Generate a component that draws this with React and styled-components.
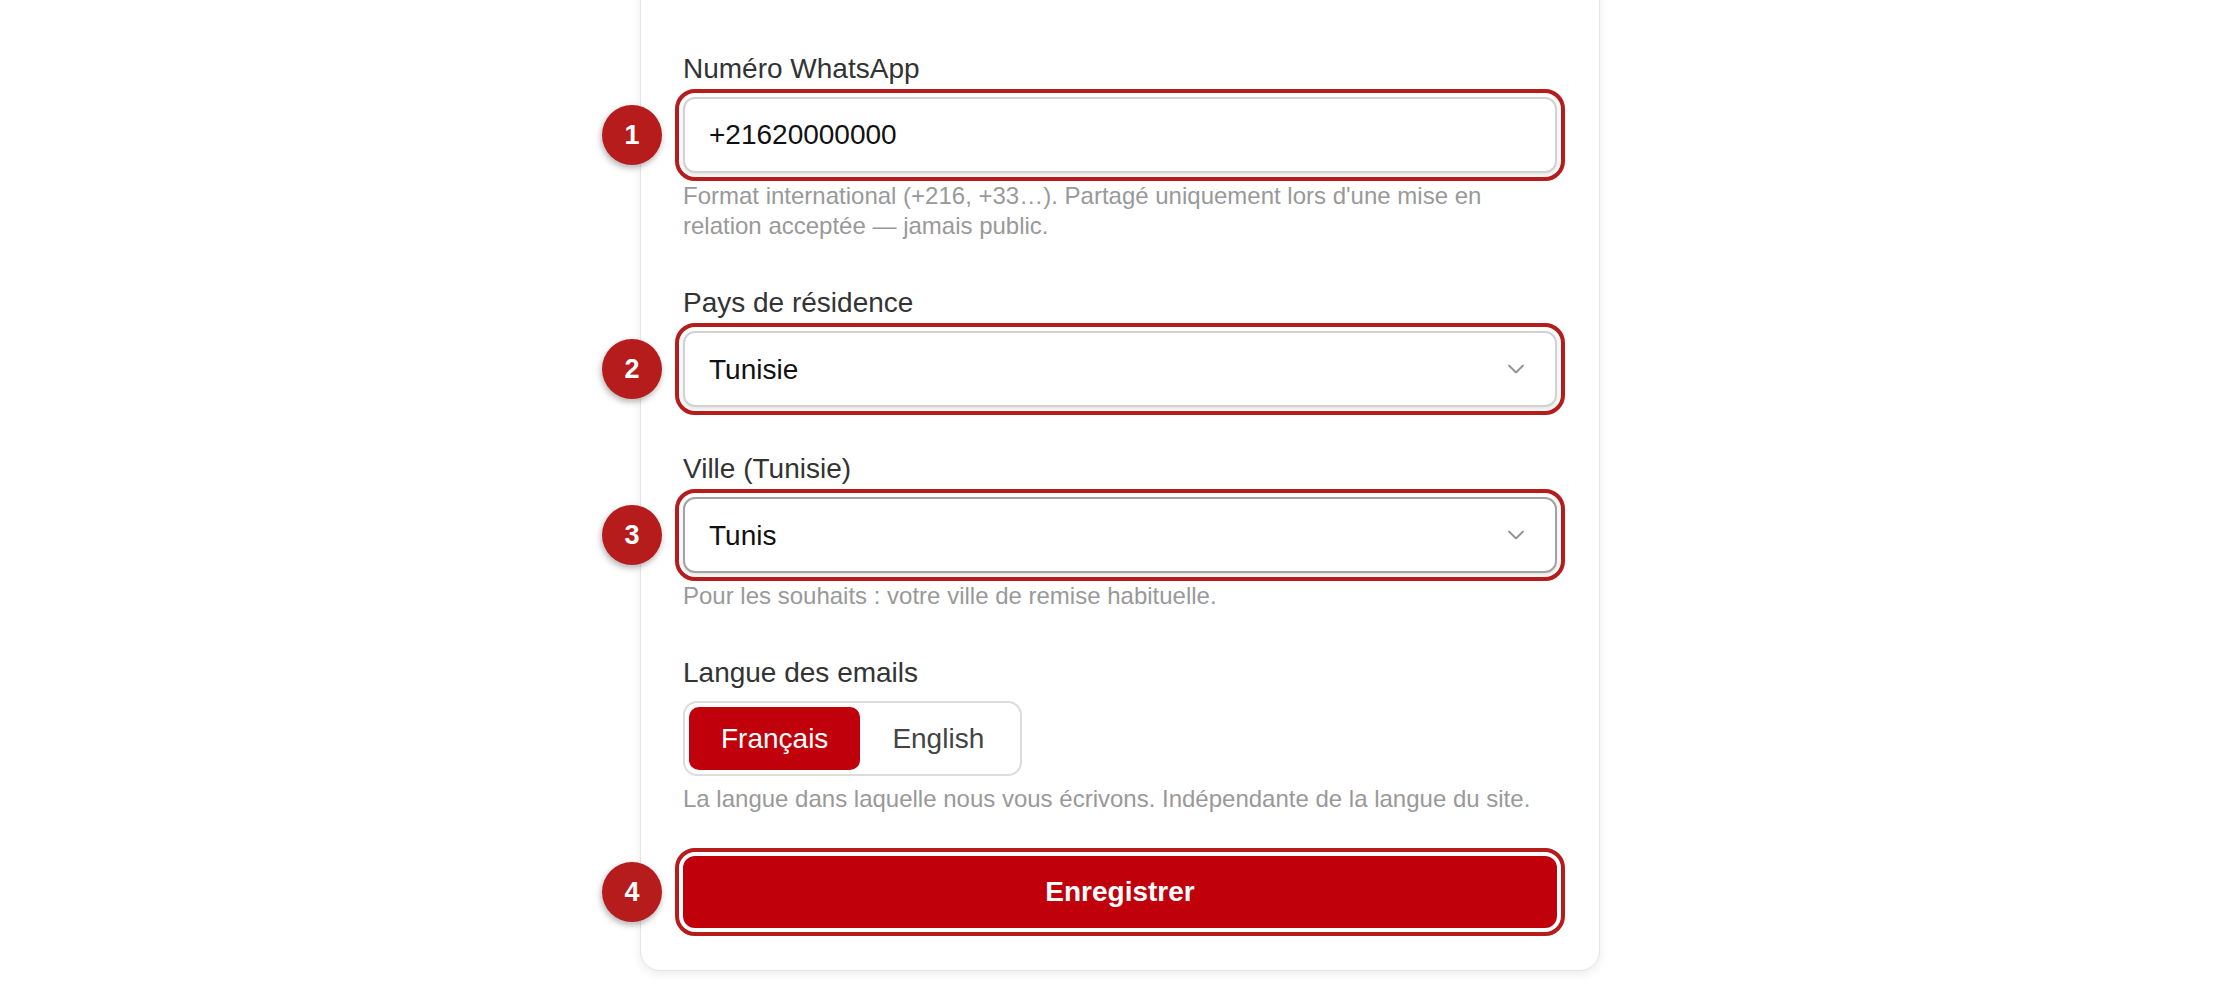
import { useState } from "react";
import styled, { createGlobalStyle, css } from "styled-components";

/**
 * Profil — contact
 *
 * 1 : numéro WhatsApp
 * 2 : pays de résidence
 * 3 : ville
 * 4 : enregistrer
 */

const GlobalStyle = createGlobalStyle`
  html, body {
    margin: 0;
    padding: 0;
    background: #fff;
  }
  body {
    font-family: "Liberation Sans", Arial, sans-serif;
    overflow: hidden;
  }
  * {
    box-sizing: border-box;
  }
`;

const cities = ["Tunis", "Sfax", "Sousse", "Nabeul", "Bizerte"];
const countries = ["Tunisie", "France", "Belgique", "Canada"];

const App = () => {
  const [phone, setPhone] = useState("+21620000000");
  const [country, setCountry] = useState("Tunisie");
  const [city, setCity] = useState("Tunis");
  const [lang, setLang] = useState("fr");

  return (
    <Page>
      <GlobalStyle />
      <Card>
        <Form onSubmit={(e) => e.preventDefault()}>
          {/* WhatsApp */}
          <Field>
            <Label htmlFor="phone">Numéro WhatsApp</Label>
            <Control>
              <Badge>1</Badge>
              <TextInput
                id="phone"
                value={phone}
                onChange={(e) => setPhone(e.target.value)}
              />
            </Control>
            <Hint>
              Format international (+216, +33…). Partagé uniquement lors d'une
              mise en relation acceptée — jamais public.
            </Hint>
          </Field>

          {/* pays */}
          <Field>
            <Label htmlFor="country">Pays de résidence</Label>
            <Control>
              <Badge>2</Badge>
              <SelectBox
                id="country"
                value={country}
                onChange={(e) => setCountry(e.target.value)}
              >
                {countries.map((c) => (
                  <option key={c}>{c}</option>
                ))}
              </SelectBox>
              <Chevron />
            </Control>
          </Field>

          {/* ville */}
          <Field>
            <Label htmlFor="city">Ville (Tunisie)</Label>
            <Control>
              <Badge>3</Badge>
              <SelectBox
                id="city"
                $hover
                value={city}
                onChange={(e) => setCity(e.target.value)}
              >
                {cities.map((c) => (
                  <option key={c}>{c}</option>
                ))}
              </SelectBox>
              <Chevron />
            </Control>
            <Hint>Pour les souhaits : votre ville de remise habituelle.</Hint>
          </Field>

          {/* langue */}
          <Field>
            <Label as="span">Langue des emails</Label>
            <Toggle>
              <ToggleOption
                type="button"
                $active={lang === "fr"}
                onClick={() => setLang("fr")}
              >
                Français
              </ToggleOption>
              <ToggleOption
                type="button"
                $active={lang === "en"}
                onClick={() => setLang("en")}
              >
                English
              </ToggleOption>
            </Toggle>
            <Hint>
              La langue dans laquelle nous vous écrivons. Indépendante de la
              langue du site.
            </Hint>
          </Field>

          <Control $top={42}>
            <Badge>4</Badge>
            <SaveButton type="submit">Enregistrer</SaveButton>
          </Control>
        </Form>
      </Card>
    </Page>
  );
};

const Chevron = () => (
  <ChevronIcon width="16" height="9" viewBox="0 0 16 9" aria-hidden="true">
    <path
      d="M1 1 L8 8 L15 1"
      fill="none"
      stroke="#939393"
      strokeWidth="1.9"
      strokeLinecap="round"
      strokeLinejoin="round"
    />
  </ChevronIcon>
);

export default App;

const marked = css`
  outline: 4px solid #b71c1c;
  outline-offset: 4px;
`;

const Page = styled.div`
  display: flex;
  justify-content: center;
  width: 100%;
  height: 1008px;
`;

const Card = styled.div`
  width: 960px;
  margin-top: -48px;
  align-self: flex-start;
  padding: 100px 42px 42px;

  background: #fff;
  border: 1px solid #e4e4e4;
  border-radius: 20px;
  box-shadow: 0 3px 10px rgba(0, 0, 0, 0.08);
`;

const Form = styled.form`
  display: flex;
  flex-direction: column;
  gap: 46px;
`;

const Field = styled.div`
  display: flex;
  flex-direction: column;
`;

const Label = styled.label`
  margin-bottom: 12px;

  color: #333;
  font-size: 28px;
  line-height: 32px;
`;

const Control = styled.div`
  position: relative;
  margin-top: ${({ $top }) => ($top ? `${$top - 46}px` : 0)};
`;

const Badge = styled.span`
  position: absolute;
  top: 50%;
  left: -81px;
  z-index: 2;
  transform: translateY(-50%);

  display: flex;
  justify-content: center;
  align-items: center;
  width: 60px;
  height: 60px;

  border-radius: 50%;
  background: #b71c1c;
  box-shadow: -1px 3px 6px rgba(0, 0, 0, 0.3);

  color: #fff;
  font-size: 27px;
  font-weight: 700;
`;

const field = css`
  display: block;
  width: 100%;
  height: 76px;
  padding: 0 24px;

  background: #fff;
  border: 2px solid ${({ $hover }) => ($hover ? "#a3a3a3" : "#d2d2d2")};
  border-radius: 12px;
  box-shadow: 0 2px 4px rgba(0, 0, 0, 0.12);

  color: #111;
  font-family: "Liberation Sans", Arial, sans-serif;
  font-size: 28px;

  ${marked}
`;

const TextInput = styled.input`
  ${field}
`;

const SelectBox = styled.select`
  ${field}
  padding-right: 64px;
  appearance: none;
  -webkit-appearance: none;
`;

const ChevronIcon = styled.svg`
  position: absolute;
  top: 50%;
  right: 33px;
  transform: translateY(-50%);
  pointer-events: none;
`;

const Hint = styled.p`
  margin: 8px 0 0;

  color: #999;
  font-size: 24px;
  line-height: 30px;
`;

const Toggle = styled.div`
  display: inline-flex;
  align-self: flex-start;
  padding: 4px;

  border: 2px solid #dcdcdc;
  border-radius: 14px;
  background: #fff;
`;

const ToggleOption = styled.button`
  height: 63px;
  padding: 0 32px;

  border: none;
  border-radius: 10px;
  background: ${({ $active }) => ($active ? "#c0000a" : "transparent")};

  color: ${({ $active }) => ($active ? "#fff" : "#444")};
  font-family: "Liberation Sans", Arial, sans-serif;
  font-size: 28px;
  cursor: pointer;
`;

const SaveButton = styled.button`
  display: block;
  width: 100%;
  height: 72px;

  border: none;
  border-radius: 12px;
  background: #c0000a;

  color: #fff;
  font-family: "Liberation Sans", Arial, sans-serif;
  font-size: 28px;
  font-weight: 700;
  cursor: pointer;

  ${marked}
`;
